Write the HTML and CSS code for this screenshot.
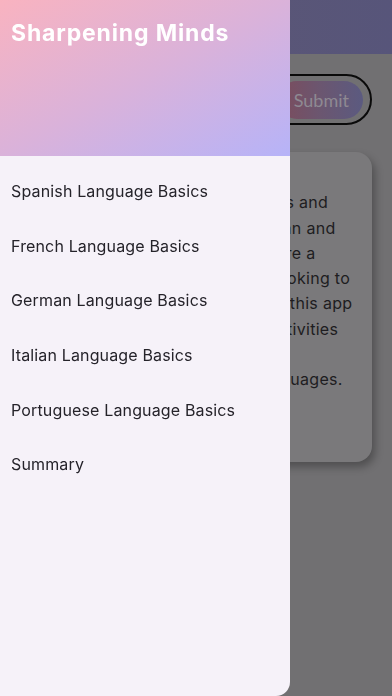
FILE: index.html
```html
<!DOCTYPE html>
<html lang="en">
<head>
<meta charset="utf-8">
<meta name="viewport" content="width=device-width, initial-scale=1">
<title>Sharpening Minds</title>
<link rel="stylesheet" href="styles.css">
</head>
<body>
<div class="app">
  <header class="appbar"></header>
  <main class="content">
    <div class="input-row">
      <div class="field"></div>
      <div class="submit-wrap">
        <button class="submit">Submit</button>
      </div>
    </div>
    <section class="card">
      <p class="card-text">Welcome!<br>Explore essential words, phrases and<br>basic grammar in French, German and<br>Italian and more. Whether you are a<br>curious beginner or a traveler looking to<br>brush up on your basics swiftly, this app<br>offers lessons and rewarding activities<br>to help you learn at your pace<br>and gain confidence in new languages.</p>
    </section>
  </main>
</div>

<nav class="drawer">
  <div class="drawer-header">
    <h1 class="drawer-title">Sharpening Minds</h1>
  </div>
  <ul class="menu">
    <li class="menu-item">Spanish Language Basics</li>
    <li class="menu-item">French Language Basics</li>
    <li class="menu-item">German Language Basics</li>
    <li class="menu-item">Italian Language Basics</li>
    <li class="menu-item">Portuguese Language Basics</li>
    <li class="menu-item">Summary</li>
  </ul>
</nav>
</body>
</html>
```
FILE: styles.css
```css
* { box-sizing: border-box; }
html, body {
  margin: 0;
  padding: 0;
  width: 392px;
  height: 696px;
  overflow: hidden;
  background: #717072;
  font-family: Inter, "Noto Sans", sans-serif;
}
.app {
  display: flex;
  flex-direction: column;
  height: 696px;
}
.appbar {
  height: 54px;
  background: linear-gradient(90deg, #5f5472 0%, #5a5676 60%, #57557a 100%);
  flex: none;
}
.content {
  padding: 20px 20px 0 20px;
  display: flex;
  flex-direction: column;
}
.input-row {
  display: flex;
  align-items: center;
  height: 51px;
}
.field {
  flex: 1;
}
.submit-wrap {
  width: 110px;
  height: 51px;
  border: 2px solid #0a0a0a;
  border-radius: 26px;
  display: flex;
  align-items: center;
  justify-content: flex-end;
  padding-right: 7px;
}
.submit {
  height: 38px;
  border: none;
  border-radius: 19px;
  background: linear-gradient(90deg, #7c4c5c 0%, #6b5670 50%, #5b5a80 100%);
  color: #8e8992;
  font-family: Lato, "Noto Sans", sans-serif;
  font-size: 18px;
  font-weight: 400;
  padding: 0 14px 0 16px;
  line-height: 38px;
}
.card {
  margin-top: 27px;
  height: 310px;
  background: #7a797b;
  border-radius: 16px;
  box-shadow: 3px 5px 8px rgba(0, 0, 0, 0.3);
  padding: 13px 16px 16px 16px;
}
.card-text {
  margin: 0;
  font-size: 16px;
  line-height: 25.3px;
  letter-spacing: 0.3px;
  color: #1e1d21;
  white-space: nowrap;
}
.drawer {
  position: fixed;
  left: 0;
  top: 0;
  bottom: 0;
  width: 290px;
  background: #f6f2f9;
  border-bottom-right-radius: 14px;
  overflow: hidden;
}
.drawer-header {
  height: 156px;
  background: linear-gradient(to bottom right, #f9b3c0 0%, #dab2da 50%, #b6b3f8 100%);
  padding: 19px 11px 0 11px;
}
.drawer-title {
  margin: 0;
  color: #ffffff;
  font-size: 23px;
  font-weight: 700;
  letter-spacing: 0.85px;
  line-height: 28px;
}
.menu {
  list-style: none;
  margin: 0;
  padding: 8px 0 0 0;
}
.menu-item {
  height: 54.6px;
  display: flex;
  align-items: center;
  padding: 0 11px;
  font-size: 16px;
  letter-spacing: 0.15px;
  color: #25232a;
}
```
